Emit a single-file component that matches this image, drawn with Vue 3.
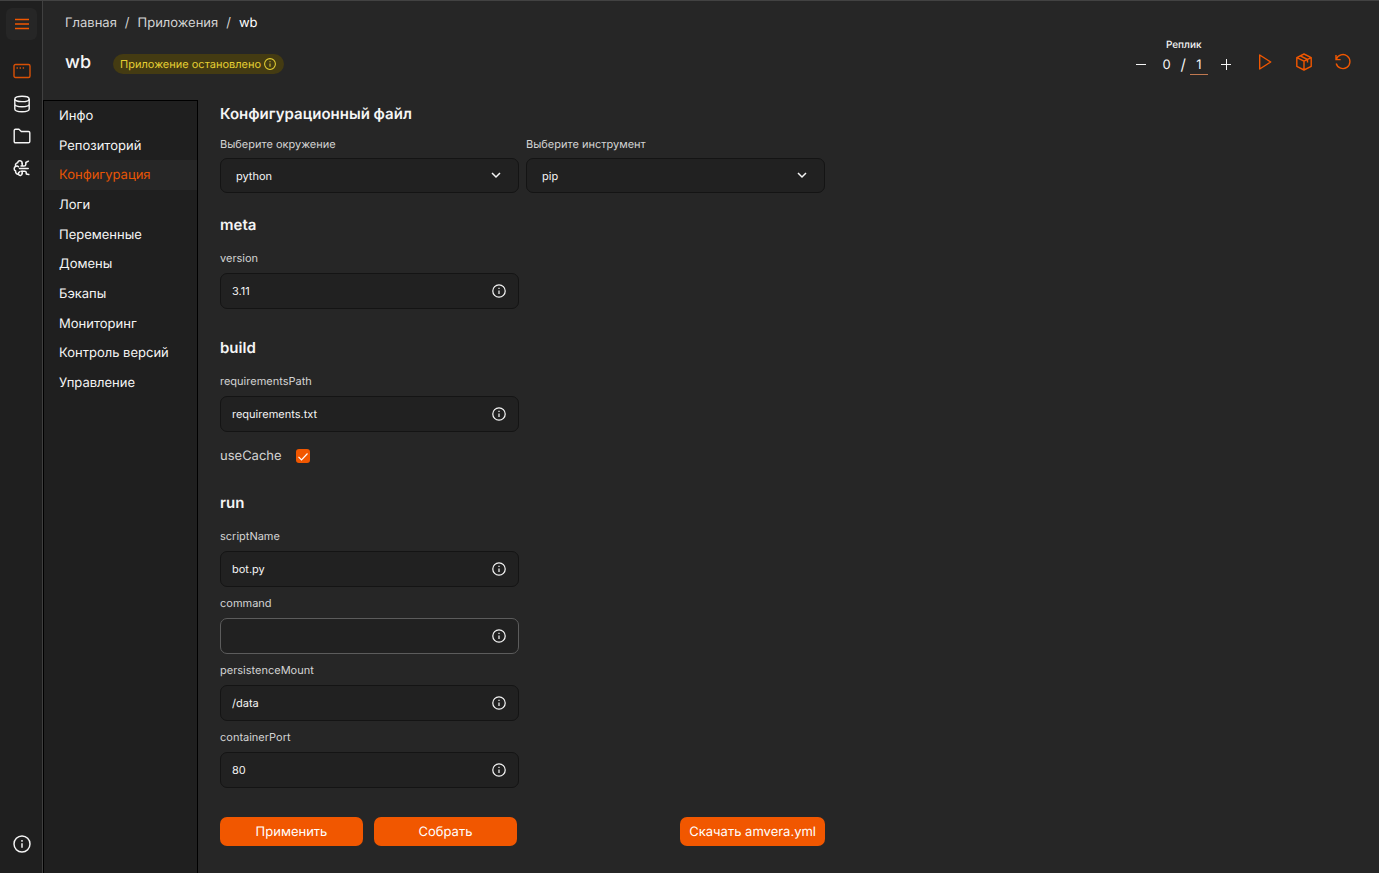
<template>
  <div class="layout">
    <aside class="rail">
      <button class="rail-toggle" type="button" aria-label="Меню">
        <svg width="16" height="16" viewBox="0 0 16 16" fill="none" stroke="currentColor" stroke-width="1.5">
          <path d="M1 3.5h14M1 8h14M1 12.5h14" />
        </svg>
      </button>
      <nav class="rail-nav" aria-label="Разделы">
        <a href="#" class="rail-link active" aria-label="Приложения">
          <svg width="18" height="18" viewBox="0 0 18 18" fill="none" stroke="currentColor" stroke-width="1.4">
            <rect x="1" y="1.5" width="16" height="13" rx="1.5" />
            <path d="M3.5 5h1.4M6.6 5H8M9.7 5h1.4" />
          </svg>
        </a>
        <a href="#" class="rail-link" aria-label="Базы данных">
          <svg width="18" height="18" viewBox="0 0 18 18" fill="none" stroke="currentColor" stroke-width="1.4">
            <ellipse cx="9" cy="3.9" rx="7.2" ry="2.7" />
            <path d="M1.8 3.9v10.2c0 1.5 3.2 2.7 7.2 2.7s7.2-1.2 7.2-2.7V3.9M1.8 9c0 1.5 3.2 2.7 7.2 2.7s7.2-1.2 7.2-2.7" />
          </svg>
        </a>
        <a href="#" class="rail-link" aria-label="Файлы">
          <svg width="18" height="18" viewBox="0 0 18 18" fill="none" stroke="currentColor" stroke-width="1.4" stroke-linejoin="round">
            <path d="M1.2 14.5v-11c0-.8.5-1.3 1.3-1.3h3.4l2.4 2.3h7.2c.8 0 1.3.5 1.3 1.3v8.7c0 .8-.5 1.3-1.3 1.3h-13c-.8 0-1.3-.5-1.3-1.3z" />
          </svg>
        </a>
        <a href="#" class="rail-link" aria-label="Модели">
          <svg width="18" height="18" viewBox="0 0 18 18" fill="none" stroke="currentColor" stroke-width="1.5" stroke-linecap="round" stroke-linejoin="round">
            <path d="M9.2 4.5C9.2 1.2 5 .6 4.7 3.8 2.400 4.200 2.100 6 2.800 7.300.6 8.300.7 11 2.600 12c-.2 2.200 1.200 3.300 2.800 3.100.8 2.300 3.800 1.900 3.800-.8" />
            <path d="M2.800 7.300c1-.6 2-.4 2.700.4M5.400 15.100c-.2-1.200.3-2 1.400-2.400" />
            <path d="M9.200 4.500v2.500M9.200 12v2.300M8 7h3c1.300 0 1.800-.6 1.800-1.600V4.200M6.500 9.600h8.700M8 12.200h3.600c1.200 0 1.700.6 1.700 1.600v.7" />
            <path d="M12.800 3.500l2.600-1.300M13.300 15l2.500.6" />
          </svg>
        </a>
      </nav>
      <a href="#" class="rail-link rail-info" aria-label="Справка">
        <svg width="18" height="18" viewBox="0 0 16 16" fill="none" stroke="currentColor" stroke-width="1.3">
          <circle cx="8" cy="8" r="7.1" />
          <path d="M8 7.3v4M8 4.500v1.400" />
        </svg>
      </a>
    </aside>

    <div class="page">
      <header class="header">
        <nav class="breadcrumbs" aria-label="Путь">
          <a href="#">Главная</a>
          <span>/</span>
          <a href="#">Приложения</a>
          <span>/</span>
          <span class="current">wb</span>
        </nav>
        <div class="header-row">
          <h1>wb</h1>
          <div class="status">
            Приложение остановлено
            <svg width="12" height="12" viewBox="0 0 16 16" fill="none" stroke="currentColor" stroke-width="1.4">
              <circle cx="8" cy="8" r="7.2" />
              <path d="M8 7.3v4.2M8 4.300v1.500" />
            </svg>
          </div>
          <div class="replicas">
            <label for="replicas">Реплик</label>
            <div class="counter">
              <button type="button" aria-label="Уменьшить" @click="decrease">
                <svg width="12" height="12" viewBox="0 0 12 12" stroke="currentColor"><path d="M1 5.500h10" /></svg>
              </button>
              <span class="running">0</span>
              <span class="slash">/</span>
              <input id="replicas" v-model="replicas" type="text" />
              <button type="button" aria-label="Увеличить" @click="replicas++">
                <svg width="12" height="12" viewBox="0 0 12 12" stroke="currentColor"><path d="M1 5.500h10M6.500 0v11" /></svg>
              </button>
            </div>
          </div>
          <div class="actions">
            <button type="button" aria-label="Запустить">
              <svg width="18" height="18" viewBox="0 0 18 18" fill="none" stroke="currentColor" stroke-width="1.4" stroke-linejoin="round">
                <path d="M3.7 2v14L14.7 9z" />
              </svg>
            </button>
            <button type="button" aria-label="Собрать">
              <svg width="18" height="18" viewBox="0 0 18 18" fill="none" stroke="currentColor" stroke-width="1.4" stroke-linejoin="round">
                <path d="M9 1l7.2 3.6v8.8L9 17l-7.2-3.6V4.6zM1.8 4.6L9 8.2l7.2-3.6M9 8.2V17M5.3 2.9l7.2 3.6v3" />
              </svg>
            </button>
            <button type="button" aria-label="Перезапустить">
              <svg width="18" height="18" viewBox="0 0 18 18" fill="none" stroke="currentColor" stroke-width="1.4">
                <path d="M2 2v4.6h4.6M2.3 6.3A7 7 0 1 1 2.2 10.5" />
              </svg>
            </button>
          </div>
        </div>
      </header>

      <div class="body">
        <nav class="menu" aria-label="Приложение">
          <ul>
            <li v-for="item in menu" :key="item">
              <a href="#" :class="{ active: item === current }" @click.prevent="current = item">{{ item }}</a>
            </li>
          </ul>
        </nav>

        <main class="content">
          <form class="config" @submit.prevent>
            <h2>Конфигурационный файл</h2>
            <div class="selects">
              <div class="field">
                <label for="environment">Выберите окружение</label>
                <div class="control">
                  <select id="environment" v-model="environment">
                    <option>python</option>
                    <option>node</option>
                  </select>
                  <svg class="chevron" width="10" height="10" viewBox="0 0 10 10" fill="none" stroke="currentColor" stroke-width="1.5"><path d="M1 3l4 4 4-4" /></svg>
                </div>
              </div>
              <div class="field">
                <label for="tool">Выберите инструмент</label>
                <div class="control">
                  <select id="tool" v-model="tool">
                    <option>pip</option>
                    <option>conda</option>
                  </select>
                  <svg class="chevron" width="10" height="10" viewBox="0 0 10 10" fill="none" stroke="currentColor" stroke-width="1.5"><path d="M1 3l4 4 4-4" /></svg>
                </div>
              </div>
            </div>

            <section v-for="section in sections" :key="section.name" class="section">
              <h2>{{ section.name }}</h2>
              <div class="fields">
                <div v-for="field in section.fields" :key="field.name" class="field">
                  <label :for="field.name">{{ field.name }}</label>
                  <div class="control">
                    <input :id="field.name" v-model="field.value" type="text" :class="{ empty: !field.value }" />
                    <button class="hint" type="button" :aria-label="field.name">
                      <svg width="14" height="14" viewBox="0 0 16 16" fill="none" stroke="currentColor" stroke-width="1.4">
                        <circle cx="8" cy="8" r="7.1" />
                        <path d="M8 7.3v4.2M8 4.3v1.5" />
                      </svg>
                    </button>
                  </div>
                </div>
              </div>
              <div v-if="section.name === 'build'" class="check">
                <label for="useCache">useCache</label>
                <span class="check-box">
                  <input id="useCache" v-model="useCache" type="checkbox" />
                  <svg v-if="useCache" width="14" height="14" viewBox="0 0 14 14" fill="none" stroke="#fff" stroke-width="1.2"><path d="M2.5 7.800l3 3L11.500 4.500" /></svg>
                </span>
              </div>
            </section>

            <div class="buttons">
              <button type="submit">Применить</button>
              <button type="button">Собрать</button>
              <button type="button" class="download">Скачать amvera.yml</button>
            </div>
          </form>
        </main>
      </div>
    </div>
  </div>
</template>

<script setup>
import { ref } from "vue";

const menu = [
  "Инфо",
  "Репозиторий",
  "Конфигурация",
  "Логи",
  "Переменные",
  "Домены",
  "Бэкапы",
  "Мониторинг",
  "Контроль версий",
  "Управление",
];
const current = ref("Конфигурация");
const environment = ref("python");
const tool = ref("pip");
const useCache = ref(true);
const replicas = ref(1);

const sections = ref([
  { name: "meta", fields: [{ name: "version", value: "3.11" }] },
  {
    name: "build",
    fields: [{ name: "requirementsPath", value: "requirements.txt" }],
  },
  {
    name: "run",
    fields: [
      { name: "scriptName", value: "bot.py" },
      { name: "command", value: "" },
      { name: "persistenceMount", value: "/data" },
      { name: "containerPort", value: "80" },
    ],
  },
]);

const decrease = () => {
  if (replicas.value > 0) replicas.value--;
};
</script>

<style>
body {
  margin: 0;
  background-color: #262626;
}
</style>

<style scoped>
* {
  box-sizing: border-box;
}

.layout {
  display: flex;
  min-height: 100vh;
  border-top: 1px solid #424242;
  background-color: #262626;
  color: #f5f5f5;
  font-family: Inter, sans-serif;
  font-size: 13px;
  line-height: 20px;
  text-rendering: geometricPrecision;
}

a {
  color: inherit;
  text-decoration: none;
}

button,
input,
select {
  font-family: inherit;
  color: inherit;
  text-rendering: inherit;
}

button {
  padding: 0;
  border: none;
  background: none;
  cursor: pointer;
}

svg {
  display: block;
}

.rail {
  display: flex;
  flex-direction: column;
  align-items: center;
  width: 43px;
  flex-shrink: 0;
  padding: 7px 0 20px 1px;
  border-right: 1px solid #404040;
  background-color: #1f1f1f;
}

.rail-toggle {
  display: flex;
  align-items: center;
  justify-content: center;
  width: 31px;
  height: 32px;
  border-radius: 6px;
  background-color: #262626;
  color: #f15700;
}

.rail-nav {
  display: flex;
  flex-direction: column;
  gap: 14px;
  margin-top: 23px;
}

.rail-link.active {
  color: #d85006;
}

.rail-info {
  margin-top: auto;
}

.page {
  display: flex;
  flex-direction: column;
  flex: 1;
  min-width: 0;
}

.header {
  height: 99px;
  padding: 12px 27px 0 22px;
}

.breadcrumbs {
  display: flex;
  gap: 8px;
  color: #d4d4d4;
}

.breadcrumbs .current {
  color: #fff;
}

.header-row {
  display: flex;
  align-items: flex-start;
  margin-top: 5px;
}

h1 {
  margin: 12px 22px 0 0;
  font-size: 18px;
  line-height: 26px;
  font-weight: 500;
}

.status {
  display: flex;
  align-items: center;
  gap: 3px;
  height: 20px;
  margin-top: 16px;
  padding: 0 8px 0 7px;
  border-radius: 10px;
  background-color: #443b12;
  color: #e5cf33;
  font-size: 11px;
}

.replicas {
  display: flex;
  flex-direction: column;
  align-items: center;
  margin-left: auto;
}

.replicas label {
  font-size: 10px;
  line-height: 14px;
  font-weight: 500;
}

.counter {
  display: flex;
  align-items: center;
  height: 22px;
  margin-top: 2px;
}

.running {
  margin-left: 15px;
}

.slash {
  margin: 0 4px 0 10px;
  font-size: 15px;
}

.counter input {
  width: 18px;
  height: 20px;
  margin-right: 12px;
  padding: 0;
  border: none;
  border-bottom: 1px solid #c07850;
  background: none;
  font-size: 13px;
  text-align: center;
}

.actions {
  display: flex;
  gap: 21px;
  margin: 15px 0 0 24px;
  color: #f15700;
}

.body {
  display: flex;
  flex: 1;
}

.menu {
  width: 155px;
  flex-shrink: 0;
  border: 1px solid #000;
  border-bottom: none;
  background-color: #1f1f1f;
}

.menu ul {
  display: flex;
  flex-direction: column;
  height: 297px;
  margin: 0;
  padding: 0;
  list-style: none;
}

.menu li {
  display: flex;
  flex: 1;
}

.menu a {
  display: flex;
  align-items: center;
  flex: 1;
  padding-left: 15px;
}

.menu a.active {
  background-color: #262626;
  color: #e85504;
}

.content {
  flex: 1;
  padding: 4px 22px 27px;
}

.config {
  max-width: 605px;
}

h2 {
  margin: 0;
  font-size: 15px;
  line-height: 20px;
  font-weight: 600;
}

.selects {
  display: grid;
  grid-template-columns: 1fr 1fr;
  gap: 7px;
  margin: 12px 0 22px;
}

.field {
  display: flex;
  flex-direction: column;
  gap: 7px;
}

.selects .field {
  gap: 6px;
}

.field label {
  color: #d4d4d4;
  font-size: 11px;
  line-height: 16px;
}

.control {
  position: relative;
}

.control input,
.control select {
  display: block;
  width: 100%;
  height: 36px;
  padding: 0 34px 0 11px;
  border: 1px solid #141414;
  border-radius: 7px;
  outline: none;
  background-color: #212121;
  font-size: 11px;
}

.control select {
  height: 35px;
  padding-left: 15px;
  appearance: none;
}

.control input.empty {
  border-color: #5c5c5c;
}

.chevron {
  position: absolute;
  top: 12px;
  right: 18px;
  pointer-events: none;
}

.hint {
  position: absolute;
  top: 11px;
  right: 13px;
}

.section {
  margin-bottom: 29px;
}

.fields {
  display: flex;
  flex-direction: column;
  gap: 8px;
  max-width: 299px;
  margin-top: 15px;
}

.check {
  display: flex;
  align-items: center;
  gap: 14px;
  margin-top: 16px;
  color: #d4d4d4;
  line-height: 16px;
}

.check-box {
  position: relative;
}

.check-box input {
  display: block;
  width: 14px;
  height: 14px;
  margin: 0;
  border-radius: 3px;
  background-color: #f15700;
  appearance: none;
}

.check-box svg {
  position: absolute;
  top: 0;
  left: 0;
  pointer-events: none;
}

.buttons {
  display: flex;
  gap: 11px;
}

.buttons button {
  min-width: 143px;
  height: 29px;
  padding: 0 9px;
  border-radius: 7px;
  background-color: #f15700;
  color: #fff;
  font-size: 13px;
}

.buttons .download {
  margin-left: auto;
}
</style>
